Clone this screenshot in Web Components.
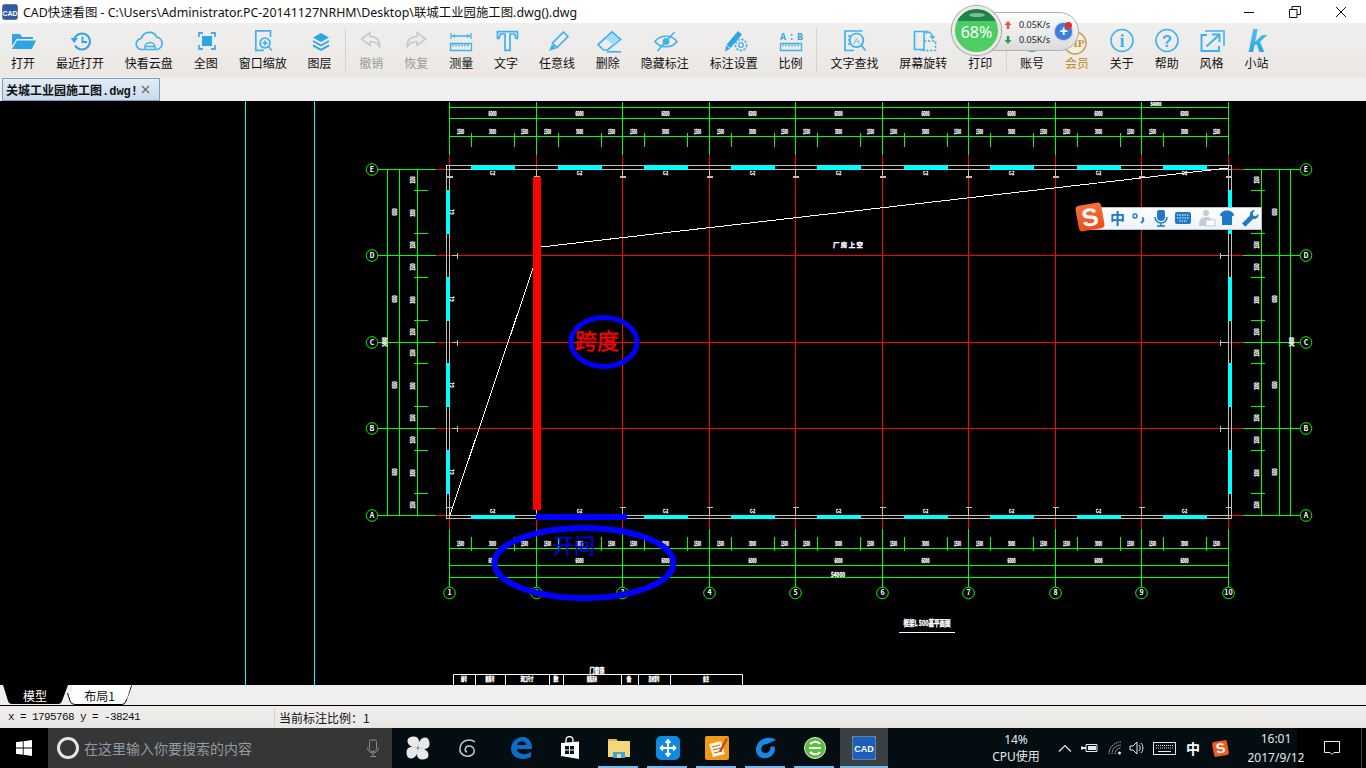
<!DOCTYPE html>
<html>
<head>
<meta charset="utf-8">
<title>CAD快速看图</title>
<style>
  html, body { margin: 0; height: 100%; overflow: hidden; background: #000; }
  body {
    display: flex;
    flex-direction: column;
    height: 768px;
    font-family: "Noto Sans CJK SC", "Noto Sans", sans-serif;
    color: #000;
  }
</style>
</head>
<body>
<cad-titlebar>CAD快速看图 - C:\Users\Administrator.PC-20141127NRHM\Desktop\联城工业园施工图.dwg().dwg</cad-titlebar>
<cad-toolbar>
  <cad-tool icon="open">打开</cad-tool>
  <cad-tool icon="recent">最近打开</cad-tool>
  <cad-tool icon="cloud">快看云盘</cad-tool>
  <cad-tool icon="full">全图</cad-tool>
  <cad-tool icon="zoomwin">窗口缩放</cad-tool>
  <cad-tool icon="layers">图层</cad-tool>
  <cad-sep></cad-sep>
  <cad-tool icon="undo" disabled>撤销</cad-tool>
  <cad-tool icon="redo" disabled>恢复</cad-tool>
  <cad-tool icon="measure">测量</cad-tool>
  <cad-tool icon="text">文字</cad-tool>
  <cad-tool icon="pencil">任意线</cad-tool>
  <cad-tool icon="eraser">删除</cad-tool>
  <cad-tool icon="eye">隐藏标注</cad-tool>
  <cad-tool icon="penset">标注设置</cad-tool>
  <cad-tool icon="scale">比例</cad-tool>
  <cad-sep></cad-sep>
  <cad-tool icon="find">文字查找</cad-tool>
  <cad-tool icon="rotate">屏幕旋转</cad-tool>
  <cad-tool icon="print">打印</cad-tool>
  <cad-sep></cad-sep>
  <cad-tool icon="user">账号</cad-tool>
  <cad-tool icon="vip" gold>会员</cad-tool>
  <cad-tool icon="info">关于</cad-tool>
  <cad-tool icon="help">帮助</cad-tool>
  <cad-tool icon="style">风格</cad-tool>
  <cad-tool icon="site">小站</cad-tool>
</cad-toolbar>
<cad-tabbar>关城工业园施工图.dwg!</cad-tabbar>
<cad-drawing><ime-bar></ime-bar></cad-drawing>
<cad-layouts></cad-layouts>
<cad-statusbar></cad-statusbar>
<win-taskbar></win-taskbar>
<net-widget></net-widget>

<script>
const BLUE = "#3db3ee";
const DEEP = "#2ea5e6";
const stroke = (d, w = 1.6, c = BLUE) =>
  `<path d="${d}" fill="none" stroke="${c}" stroke-width="${w}"/>`;
const fill = (d, c = DEEP) => `<path d="${d}" fill="${c}"/>`;

const rulerTicks = (y) => {
  let s = "";
  for (let x = 10; x < 28; x += 3) s += `M${x} ${y}v3`;
  return s;
};

const ICONS = {
  open: fill("M7 6h8l2 3h11v2H11.5L7 18z") + fill("M12 12.5H31l-4 8.5H7z"),
  recent:
    stroke("M12.3 11A8 8 0 1 1 13 17.5", 2, DEEP) +
    fill("M8.5 10h7.5l-3.7 5z") +
    stroke("M20.5 8.5V14h4.5", 1.8, DEEP),
  cloud:
    stroke("M13 21.5h-2a5.5 5.5 0 0 1-.6-11 8.2 8.2 0 0 1 15.4-1.4 6.3 6.3 0 0 1 .2 12.4h-1.5", 1.7) +
    stroke("M14 21.5v-2.5a5 4.5 0 0 1 10 0v2.5zM14 18.5h10", 1.5),
  full:
    fill("M14 8h10v10H14z") +
    stroke("M11 9V5h4M23 5h4v4M27 17v4h-4M15 21h-4v-4", 1.8),
  zoomwin:
    stroke("M25.5 9V2.8H10.8v19.5h8", 1.7) +
    stroke("M20 10a5 5 0 1 0 .01 0zM23.5 19l3.5 3.5M17.5 15h5M20 12.5v5", 1.6),
  layers:
    fill("M19 5l8 4.5-8 4.5-8-4.5z") +
    stroke("M11 13l8 4.5 8-4.5M11 17.3l8 4.5 8-4.5", 1.9, DEEP),
  undo: stroke("M17 4.5L8.5 11l8.5 6.5V13.5c5 0 8 1.5 10 6 0-7.5-4-11-10-11z", 1.6, "#c9c9c9"),
  redo: stroke("M19 4.5l8.5 6.5-8.5 6.5V13.5c-5 0-8 1.5-10 6 0-7.5 4-11 10-11z", 1.6, "#c9c9c9"),
  measure:
    stroke("M8 5v6M28 5v6M9 8h18", 1.3) +
    fill("M9 8l3-2v4zM27 8l-3-2v4z", BLUE) +
    stroke("M7.5 15.5h21v7h-21z" + rulerTicks(15.5), 1.3),
  text: stroke("M9.5 3.7H29.5V10.5H28L26.5 6H22V22.3H17V6H12.5L11 10.5H9.5z", 1.7),
  pencil:
    stroke("M24.5 4L29 8.5 18 19.5 13.5 15z", 1.7) +
    fill("M13 16l4.5 4.5L10 23z", BLUE),
  eraser:
    stroke("M22 4l8.5 7.5-13 10.5h-4L8 16.5z", 1.7) +
    fill("M22 5l7.5 6.6-6.5 5.4-7.4-6.6z", "#a7dcf6") +
    stroke("M17 23.8h14", 1.7),
  eye:
    stroke("M8 13.5c5-7 17-7 22 0-5 7-17 7-22 0z", 1.7) +
    fill("M19 10a3.5 3.5 0 1 0 .01 0z", BLUE) +
    stroke("M27.5 4L10.5 23", 1.6),
  penset:
    fill("M22 3l4 3.4-11.5 13.6-4-3.2z", DEEP) +
    fill("M10 17.5l4 3.2L9 23.6z", DEEP) +
    `<circle cx="25" cy="17" r="5.6" fill="#eeebe8" stroke="${BLUE}" stroke-width="1.6" stroke-dasharray="2.4 1.3"/>` +
    `<circle cx="25" cy="17" r="2.3" fill="none" stroke="${BLUE}" stroke-width="1.3"/>`,
  scale:
    `<text x="18.5" y="12" text-anchor="middle" font-family="Liberation Mono" font-weight="700" font-size="10" fill="${DEEP}" textLength="23">A:B</text>` +
    stroke("M7.5 15.5h21v7h-21z" + rulerTicks(15.5), 1.3),
  find:
    stroke("M26.5 3H9V22.5h9M12 8h3M12 12h2M12 16h2", 1.7) +
    stroke("M20.5 5.5a6.8 6.8 0 1 0 .01 0zM25.5 17.5l4 5", 1.7) +
    `<text x="20.5" y="15.5" text-anchor="middle" font-family="Liberation Sans" font-size="9" fill="${BLUE}">A</text>`,
  rotate:
    stroke("M9.5 3.5h9.5v18H9.5z", 1.6) +
    `<path d="M19 13h11.5v9.5H15" fill="none" stroke="${BLUE}" stroke-width="1.6" stroke-dasharray="2.5 1.5"/>` +
    stroke("M22 4c3 0 5 1.5 5.5 5", 1.4) +
    fill("M24.5 8h6l-3 3.5zM22 1.5V6.5L19.5 4z", BLUE),
  print:
    stroke("M12 10V4h12v6M9 10h18v9H9zM12 16h12v6H12z", 1.6),
  user:
    fill("M18 4a10 10 0 1 0 .01 0z", DEEP),
  vip:
    `<circle cx="16" cy="15" r="11" fill="#f6efe0" stroke="#c89c52" stroke-width="1.4"/>` +
    `<text x="16" y="19" text-anchor="middle" font-family="Liberation Serif" font-weight="700" font-size="11" fill="#c08f3c">VIP</text>`,
  info:
    `<circle cx="18" cy="12.5" r="11" fill="none" stroke="${BLUE}" stroke-width="1.6"/>` +
    `<text x="18" y="18.5" text-anchor="middle" font-family="Liberation Serif" font-weight="700" font-size="18" fill="${BLUE}">i</text>`,
  help:
    `<circle cx="18" cy="12.5" r="11" fill="none" stroke="${BLUE}" stroke-width="1.6"/>` +
    `<text x="18" y="19" text-anchor="middle" font-family="Liberation Sans" font-weight="700" font-size="17" fill="${BLUE}">?</text>`,
  style:
    stroke("M13 7H7.5v16H25v-5", 2) +
    stroke("M11 3h19v15", 1.6) +
    stroke("M12.5 18.5L25 7M18 6.5h7.5V14", 2),
  site:
    `<defs><linearGradient id="k" x1="0" y1="0" x2="0" y2="1"><stop offset="0" stop-color="#55c8f5"/><stop offset="1" stop-color="#1e9fe0"/></linearGradient></defs>` +
    `<text x="18" y="24" text-anchor="middle" font-family="Liberation Sans" font-style="italic" font-weight="700" font-size="32" fill="url(#k)">k</text>`,
};

customElements.define("cad-titlebar", class extends HTMLElement {
  constructor() {
    super();
    this.attachShadow({ mode: "open" });
    this.shadowRoot.innerHTML = `
      <style>
        :host { display: flex; align-items: center; height: 23px; flex: none; background: #fff; font-family: "Noto Sans", "Noto Sans CJK SC", sans-serif; font-size: 12.4px; color: #111; }
        .logo { width: 16px; height: 16px; margin: 0 5px 0 2px; flex: none; }
        .name { flex: 1; white-space: nowrap; }
        .win { display: flex; margin-right: 2px; }
        .win span { width: 46px; height: 23px; display: flex; align-items: center; justify-content: center; }
      </style>
      <svg class="logo" viewBox="0 0 16 16">
        <rect x=".5" y=".5" width="15" height="15" rx="2" fill="#2a5caa" stroke="#777"/>
        <text x="8" y="11.5" text-anchor="middle" font-family="Liberation Sans" font-size="7" font-weight="700" fill="#fff">CAD</text>
      </svg>
      <span class="name"><slot></slot></span>
      <div class="win">
        <span><svg width="12" height="12"><path d="M1 6.5h10" stroke="#111"/></svg></span>
        <span><svg width="12" height="12"><path d="M.5 3.5h7.500v8H.5zM3 3V.5h8.500v8H8" fill="none" stroke="#111"/></svg></span>
        <span><svg width="12" height="12"><path d="M1 1l10 10M11 1L1 11" stroke="#111"/></svg></span>
      </div>`;
  }
});

customElements.define("cad-toolbar", class extends HTMLElement {
  constructor() {
    super();
    this.attachShadow({ mode: "open" });
    this.shadowRoot.innerHTML = `
      <style>
        :host { display: flex; gap: 20.9px; height: 49px; flex: none; padding: 5px 0 0 11px; background: linear-gradient(#f0efee, #ebe7e3); overflow: hidden; }
      </style>
      <slot></slot>`;
  }
});

customElements.define("cad-tool", class extends HTMLElement {
  constructor() {
    super();
    this.attachShadow({ mode: "open" });
    const gold = this.hasAttribute("gold");
    const off = this.hasAttribute("disabled");
    this.shadowRoot.innerHTML = `
      <style>
        :host { display: flex; flex-direction: column; align-items: center; flex: none; font-size: 12px; line-height: 18px; color: ${gold ? "#c08a2a" : off ? "#9a9a9a" : "#111"}; }
        .icon { height: 26px; width: 0; display: flex; justify-content: center; }
        svg { flex: none; overflow: visible; }
      </style>
      <div class="icon"><svg width="36" height="26" viewBox="0 0 36 26">${ICONS[this.getAttribute("icon")] || ""}</svg></div>
      <slot></slot>`;
  }
});

customElements.define("cad-sep", class extends HTMLElement {
  constructor() {
    super();
    this.attachShadow({ mode: "open" });
    this.shadowRoot.innerHTML = `
      <style>
        :host { display: block; width: 1px; height: 44px; margin: 0 -8px 0 -7px; background: #d5d3d0; flex: none; }
      </style>`;
  }
});

customElements.define("cad-tabbar", class extends HTMLElement {
  constructor() {
    super();
    this.attachShadow({ mode: "open" });
    this.shadowRoot.innerHTML = `
      <style>
        :host { display: flex; align-items: flex-end; height: 24px; flex: none; background: #efefef; padding-left: 2px; }
        .tab { display: flex; align-items: center; width: 156px; height: 21px; margin-bottom: 0; border: 1px solid #7d9dc8; background: linear-gradient(#e3edf7, #c9dbee); font: 700 12px "Liberation Mono", "Noto Sans CJK SC", monospace; color: #111; white-space: nowrap; overflow: hidden; }
        .name { margin-left: 3px; flex: 1; overflow: hidden; }
        svg { flex: none; margin-right: 9px; }
      </style>
      <div class="tab">
        <span class="name"><slot></slot></span>
        <svg width="9" height="9"><path d="M1 1l7 7M8 1L1 8" stroke="#666" stroke-width="1.2"/></svg>
      </div>`;
  }
});

customElements.define("cad-drawing", class extends HTMLElement {
  constructor() {
    super();
    this.attachShadow({ mode: "open" });
    const axesX = [449.5, 536.5, 622.5, 709.5, 795.5, 882.5, 968.5, 1055.5, 1141.5, 1228.5];
    const axesY = [169.5, 255.5, 342.5, 428.5, 515.5];
    const GREEN = "#00ff00", RED = "#ff0000", CYAN = "#00ffff", GRAY = "#c0c0c0";
    const line = (x1, y1, x2, y2, c, w = 1) =>
      `<line x1="${x1}" y1="${y1}" x2="${x2}" y2="${y2}" stroke="${c}" stroke-width="${w}"/>`;
    const box = (x, y, w, h, c) => `<rect x="${x}" y="${y}" width="${w}" height="${h}" fill="${c}"/>`;
    // the sheet is zoomed far out, so its dimension figures squash into little blobs
    const label = (x, y, t, len = 8, size = 6.5) =>
      `<text x="${x}" y="${y}" font-size="${size}" font-weight="700" fill="#fff" stroke="#fff" stroke-width=".35" text-anchor="middle" dominant-baseline="middle" textLength="${len}" lengthAdjust="spacingAndGlyphs">${t}</text>`;
    const vlabel = (x, y, t, len = 8, size = 6.5) =>
      `<text transform="translate(${x} ${y}) rotate(-90)" font-size="${size}" font-weight="700" fill="#fff" stroke="#fff" stroke-width=".35" text-anchor="middle" dominant-baseline="middle" textLength="${len}" lengthAdjust="spacingAndGlyphs">${t}</text>`;
    const bubble = (x, y, t) =>
      `<circle cx="${x}" cy="${y}" r="5.8" fill="#000" stroke="${GREEN}"/>` +
      `<text x="${x}" y="${y + .5}" font-size="7" font-weight="700" fill="#fff" text-anchor="middle" dominant-baseline="middle">${t}</text>`;

    let s = "";
    // cyan lines of the neighbouring sheet
    s += line(245.5, 101, 245.5, 685, CYAN) + line(314.5, 101, 314.5, 685, CYAN);

    // dimension chains
    [107.5, 118.5, 136.5, 548.5, 565.5, 577.5].forEach((y) => (s += line(449, y, 1229, y, GREEN)));
    axesX.forEach((x, i) => {
      s += line(x, 155, x, 530, RED);
      s += line(x, 102, x, 155, GREEN) + line(x, 529, x, 587, GREEN);
      s += bubble(x, 593, i + 1);
      if (i < 9) {
        s += line(x + 21.5, 133, x + 21.5, 147, GREEN) + line(x + 64.5, 133, x + 64.5, 147, GREEN);
        s += line(x + 21.5, 537, x + 21.5, 551, GREEN) + line(x + 64.5, 537, x + 64.5, 551, GREEN);
        s += label(x + 43, 114, "6000") + label(x + 43, 561, "6000");
        [11, 43, 75].forEach((d) => {
          s += label(x + d, 132, d === 43 ? "3000" : "1500", 7) + label(x + d, 544, d === 43 ? "3000" : "1500", 7);
        });
        s += label(x + 43, 173.5, "C-2", 5, 5) + label(x + 43, 511.5, "C-2", 5, 5);
      }
    });
    s += label(1156, 104.5, "54000", 11, 5.5) + label(838, 575, "54000", 14);

    // rows
    axesY.forEach((y, i) => {
      const t = "EDCBA"[i];
      s += line(378, y, 436, y, GREEN) + line(1243, y, 1300, y, GREEN);
      s += line(436, y, 447, y, RED) + line(1232, y, 1243, y, RED);
      if (i > 0 && i < 4) s += line(447, y, 1232, y, RED);
      s += bubble(372, y, t) + bubble(1306, y, t);
    });
    [387.5, 399.5, 417.5, 1261.5, 1279.5, 1290.5].forEach((x) => (s += line(x, 169, x, 516, GREEN)));

    // walls
    s += line(447, 165.5, 1232, 165.5, GRAY) + line(447, 169.5, 1232, 169.5, GRAY);
    s += line(447, 515.5, 1232, 515.5, GRAY) + line(447, 518.5, 1232, 518.5, GRAY);
    s += line(446.5, 165, 446.5, 519, GRAY) + line(449.5, 165, 449.5, 519, GRAY);
    s += line(1228.5, 165, 1228.5, 519, GRAY) + line(1231.5, 165, 1231.5, 519, GRAY);
    s += box(446, 165, 1, 5, "#ffff00");

    axesX.slice(0, 9).forEach((x) => {
      const a = Math.floor(x + 21.5);
      s += box(a, 165, 44, 5, CYAN) + box(a, 515, 44, 4, CYAN);
    });
    [190, 277, 363, 450].forEach((y) => {
      s += box(446, y, 4, 44, CYAN) + box(1228, y, 4, 44, CYAN);
      s += vlabel(453, y + 22, "C-1", 5, 5);
      s += line(414, y, 428, y, GREEN) + line(414, y + 43, 428, y + 43, GREEN);
      s += line(1251, y, 1265, y, GREEN) + line(1251, y + 43, 1265, y + 43, GREEN);
      [-10, 23, 55].forEach((d) => (s += vlabel(413, y + d, d === 23 ? "3000" : "1500", 7) + vlabel(1257, y + d, d === 23 ? "3000" : "1500", 7)));
      s += vlabel(395.5, y + 22, "6000", 7) + vlabel(1275, y + 22, "6000", 7);
    });
    s += vlabel(385, 342, "24000", 9) + vlabel(1292, 342, "24000", 9);

    // columns
    axesX.forEach((x) => {
      s += line(x, 170, x, 176, GRAY, 1) + box(x - 2.5, 176, 6, 2, GRAY);
      s += line(x, 508, x, 515, GRAY, 1) + box(x - 2.5, 507, 6, 1, GRAY);
    });
    [255.5, 342.5, 428.5].forEach((y) => {
      s += line(452, y, 457, y, GRAY) + line(457.5, y - 3, 457.5, y + 3, GRAY);
      s += line(1220, y, 1228, y, GRAY) + line(1220.5, y - 3, 1220.5, y + 3, GRAY);
    });

    // sheet texts
    s += label(848, 245, "厂 房 上 空", 30, 6);
    s += label(927, 623.5, "框架L 500基平面图", 47, 8);
    s += box(899, 632, 56, 1, "#fff");

    // door table, cut off by the edge of the viewport
    s += `<path d="M453.5 685V674.5H742.5V685" fill="none" stroke="#fff"/>`;
    [475, 505, 549, 563, 621, 638, 670].forEach((x) => (s += line(x + .5, 675, x + .5, 685, "#fff")));
    [[464, "编号", 6], [490, "图集号", 9], [527, "洞口尺寸", 13], [556, "数", 5], [592, "图集选用", 10], [629, "备", 5], [654, "选用型号", 11], [706, "备注", 6]].forEach(
      ([x, t, len]) => (s += label(x, 679.5, t, len, 5.5))
    );
    s += label(597, 671, "门窗表", 15, 7);

    // user markups
    s += box(533, 177, 8, 333, RED);
    s += box(536, 514, 91, 6, "#0000ff");
    s += line(450, 515, 533, 268, "#fff") + line(541, 247, 1228, 168, "#fff");
    s += `<ellipse cx="604" cy="342" rx="33" ry="24.5" fill="none" stroke="#0000ff" stroke-width="5"/>`;
    s += `<ellipse cx="584" cy="563" rx="89.5" ry="35" fill="none" stroke="#0000ff" stroke-width="6"/>`;
    s += `<text x="597" y="343" font-size="22" fill="#ff0000" stroke="#ff0000" stroke-width=".4" text-anchor="middle" dominant-baseline="middle">跨度</text>`;
    s += `<text x="574" y="547" font-size="21" fill="#0000ff" text-anchor="middle" dominant-baseline="middle">开间</text>`;

    this.shadowRoot.innerHTML = `
      <style>
        :host { display: block; position: relative; height: 584px; flex: none; background: #000; overflow: hidden; }
        svg { display: block; font-family: "Noto Sans CJK SC", sans-serif; }
        line, rect { shape-rendering: crispEdges; }
      </style>
      <svg width="1366" height="584" viewBox="0 101 1366 584">${s}</svg>
      <slot></slot>`;
  }
});

customElements.define("ime-bar", class extends HTMLElement {
  constructor() {
    super();
    this.attachShadow({ mode: "open" });
    this.shadowRoot.innerHTML = `
      <style>
        :host { position: absolute; left: 1076px; top: 102px; width: 186px; height: 30px; display: block; font-family: "Noto Sans CJK SC", sans-serif; }
        .bar { position: absolute; left: 12px; right: 0; top: 4px; height: 23px; background: linear-gradient(#fff, #eef3f8); border: 1px solid #b9c4cf; box-sizing: border-box; }
        .logo { position: absolute; left: 1px; top: 1px; width: 26px; height: 26px; border-radius: 4px; background: linear-gradient(#f6703a, #ea4f1a); transform: rotate(-10deg); color: #fff; font: 700 25px/26px "Liberation Sans", sans-serif; text-align: center; }
        svg { position: absolute; left: 0; top: 0; }
        .zh { position: absolute; left: 34px; top: 3px; font-size: 15px; line-height: 24px; font-weight: 700; color: #1f78c8; }
      </style>
      <div class="bar"></div>
      <div class="logo">S</div>
      <span class="zh">中</span>
      <svg width="186" height="30" viewBox="0 0 186 30">
        <circle cx="59" cy="13" r="2" fill="none" stroke="#1f78c8" stroke-width="1.4"/>
        <path d="M66 15c2 0 2 3-1 5" fill="none" stroke="#1f78c8" stroke-width="2"/>
        <path d="M83 7h4a2 2 0 0 1 2 2v5a4 4 0 0 1-8 0V9a2 2 0 0 1 2-2z" fill="#1f78c8"/>
        <path d="M79 14a6 6 0 0 0 12 0M85 20v2.500M81 23h8" fill="none" stroke="#1f78c8" stroke-width="1.500"/>
        <g transform="translate(6 2)">
          <rect x="93" y="7" width="16" height="12" rx="2" fill="#1f78c8"/>
          <path d="M95 10h12M95 13h12M97 16h8" stroke="#fff" stroke-width="1.2" stroke-dasharray="1.5 1"/>
        </g>
        <g transform="translate(1 0)">
          <circle cx="129" cy="10" r="3" fill="#c3ccd6"/>
          <path d="M122 22c0-6 3-8 7-8s6 2 7 4l-4 5h-9z" fill="#c3ccd6"/>
          <rect x="129" y="17" width="9" height="6" fill="#fff" stroke="#c3ccd6"/>
        </g>
        <path d="M146 9l3-1.500h4l3 1.500 2.500 3-2.500 1.500V22h-10v-8.500L143.500 12z" fill="#1f78c8"/>
        <path d="M166 20.500l8-8a4 4 0 0 1 5-5l-2.500 2.500.8 2.500 2.500.8 2.500-2.500a4 4 0 0 1-5 5l-8 8z" fill="#1f78c8"/>
      </svg>`;
  }
});

customElements.define("cad-layouts", class extends HTMLElement {
  constructor() {
    super();
    this.attachShadow({ mode: "open" });
    this.shadowRoot.innerHTML = `
      <style>
        :host { display: flex; height: 20px; flex: none; background: #efefef; border-bottom: 1px solid #000; font-size: 12px; box-sizing: content-box; }
        .tab { position: relative; display: flex; align-items: center; justify-content: center; height: 20px; flex: none; }
        .model { width: 64px; margin-left: 3px; color: #fff; }
        .sheet { width: 65px; color: #111; }
        svg { position: absolute; left: 0; top: 0; }
        span { position: relative; }
      </style>
      <div class="tab model">
        <svg width="66" height="20"><path d="M0 0H65L59 16Q58 19 55 19H9Q6 19 5 16z" fill="#000"/></svg>
        <span>模型</span>
      </div>
      <div class="tab sheet">
        <svg width="66" height="20"><path d="M.5 8L3 16Q4 19.500 8 19.500H55Q58 19.500 59 16L64.500 .5" fill="#fff" stroke="#000"/><path d="M5 0H64L60 14H5z" fill="#fff"/></svg>
        <span>布局1</span>
      </div>`;
  }
});

customElements.define("cad-statusbar", class extends HTMLElement {
  constructor() {
    super();
    this.attachShadow({ mode: "open" });
    this.shadowRoot.innerHTML = `
      <style>
        :host { display: flex; align-items: center; height: 22px; flex: none; background: linear-gradient(#f1f0ee, #e9e5e1); font-size: 12px; color: #111; }
        .pos { width: 266px; flex: none; padding-left: 8px; font: 11px "Liberation Mono", monospace; letter-spacing: -.6px; white-space: pre; box-sizing: content-box; }
        .sep { width: 1px; height: 18px; background: #d3d0cc; flex: none; }
        .scale { padding-left: 4px; }
      </style>
      <span class="pos">x = 1795768 y = -38241</span>
      <span class="sep"></span>
      <span class="scale">当前标注比例：1</span>`;
  }
});

customElements.define("win-taskbar", class extends HTMLElement {
  constructor() {
    super();
    this.attachShadow({ mode: "open" });
    const petal = "M12 11.500C7 12.500 1.500 9.500 1.500 5 1.500 1.500 5 .5 8 .5 12.500 .5 14.500 5 12 11.500z";
    const apps = [
      [[0, 90, 180, 270].map((r) => `<path d="${petal}" fill="#e8e8e8" transform="rotate(${r} 12 12)"/>`).join(""), false],
      [`<path d="M20 6c-5-4-14-2-15 6-1 7 7 10 12 7 4-3 2-9-3-9-4 0-5 5-2 6" fill="none" stroke="#c8c8c8" stroke-width="1.500"/>`, false],
      [`<path d="M2 12C3 5 8 1 14 1c6 0 9 5 9 12H8c0 5 8 7 14 3v5c-8 4-20 2-20-9zM8 9h9c0-5-8-5-9 0z" fill="#0a6fc9"/>`, false],
      [`<path d="M3 7l18-1.500V23L3 20z" fill="#fff"/><path d="M8 7V4a3 3 0 0 1 7 0v2" fill="none" stroke="#fff" stroke-width="1.300"/><path d="M7 10h4v3.500H7zM12 10h4v3.500h-4zM7 14.500h4V18H7zM12 14.500h4V18h-4z" fill="#0a0f12"/>`, false],
      [`<path d="M1 3h8l2 2h12v16H1z" fill="#f6d67a"/><path d="M1 3h8l1 2H1z" fill="#e8b93f"/><path d="M6 16h12v6H6z" fill="#3aa7e0"/><path d="M10 18h4v4h-4z" fill="#f6d67a"/>`, true],
      [`<rect width="24" height="24" rx="5" fill="#0f8ae0"/><path d="M12 4v16M5 12h14M9.500 7L12 4l2.500 3M9.500 17l2.500 3 2.500-3M7 9.500L4.500 12 7 14.500M17 9.500l2.500 2.500-2.500 2.500" fill="none" stroke="#fff" stroke-width="1.800"/>`, true],
      [`<rect width="24" height="24" rx="2" fill="#f09a18"/><path d="M4 8l12-3 4 13-12 3z" fill="#fbf3d5"/><path d="M7 11l8-2M8 14l8-2M9 17l8-2" stroke="#9b7b3a"/><path d="M14 15l7-13 2 1-7 13z" fill="#c8431c"/>`, true],
      [`<path d="M22 4c-6-5-19-2-20 9-.5 8 8 11 14 8 5-3 6-8 4-11l-4 1c1 4-2 7-6 6-5-2-3-9 3-9z" fill="#1688e8"/>`, true],
      [`<circle cx="12" cy="12" r="10.500" fill="#5bbd3c"/><circle cx="12" cy="12" r="10.500" fill="none" stroke="#d8f0cc"/><path d="M6 12h12M7 16c3 3 8 3 10 0M7 8c3-3 8-3 10 0" fill="none" stroke="#fff" stroke-width="2.200"/>`, true],
      [`<rect width="24" height="24" rx="3" fill="#1c5fb8" stroke="#9aa3ab"/><text x="12" y="16" text-anchor="middle" font-family="Liberation Sans" font-weight="700" font-size="9" fill="#fff">CAD</text>`, true, true],
    ];
    const appHtml = apps
      .map(([svg, on, active], i) => `
        <div class="app ${on ? "on" : ""} ${active ? "active" : ""} ${i === 2 ? "edge" : ""}">
          <svg width="24" height="24" viewBox="0 0 24 24">${svg}</svg>
        </div>`)
      .join("");
    this.shadowRoot.innerHTML = `
      <style>
        :host { display: flex; height: 40px; flex: none; background: linear-gradient(to right, #030d12 1297px, #000 1297px, #000 1361px, #444 1361px, #444 1362px, #000 1362px); color: #fff; font-family: "Noto Sans", "Noto Sans CJK SC", sans-serif; font-size: 12px; }
        .start { width: 48px; flex: none; background: #000; display: flex; align-items: center; justify-content: center; }
        .search { width: 344px; flex: none; background: #363636; display: flex; align-items: center; box-sizing: border-box; padding-left: 9px; color: #8f9ba6; font: 14px "Noto Sans CJK SC", sans-serif; }
        .ring { width: 16px; height: 16px; border: 3px solid #e4e4e4; border-radius: 50%; margin-right: 5px; flex: none; }
        .hint { flex: 1; white-space: nowrap; }
        .mic { margin-right: 13px; flex: none; }
        .apps { display: flex; margin-left: 1px; flex: none; }
        .app { width: 49px; height: 40px; display: flex; align-items: center; justify-content: center; position: relative; box-sizing: border-box; padding-bottom: 1px; }
        .app.edge { margin-left: 5px; }
        .app.on::after { content: ""; position: absolute; left: 4px; right: 5px; bottom: 0; height: 2px; background: #76b9ed; }
        .app.active { background: #3a4145; width: 48px; margin-left: 1px; }
        .app.active::after { left: 0; right: 0; }
        .cpu { width: 60px; margin-left: 98px; flex: none; display: flex; flex-direction: column; align-items: center; line-height: 17px; padding-top: 3px; font-size: 12px; color: #e8e8e8; white-space: nowrap; box-sizing: border-box; }
        .tray { display: flex; align-items: center; flex: none; margin-left: 12px; }
        .tray svg { flex: none; display: block; }
        .lang { font: 700 14px "Noto Sans CJK SC", sans-serif; margin: 0 12px 0 10px; width: 15px; }
        .sg { width: 15px; height: 15px; border-radius: 2px; background: #ee5a1f; transform: rotate(-10deg); font: 700 14px/15px "Liberation Sans", sans-serif; text-align: center; margin-right: 18px; flex: none; }
        .clock { width: 60px; flex: none; text-align: center; line-height: 19px; font-size: 12px; color: #e8e8e8; white-space: nowrap; }
        .bell { margin-left: 18px; }
      </style>
      <div class="start">
        <svg width="16" height="16" viewBox="0 0 16 16"><path d="M0 2.300l6.800-1V7.600H0zM7.600 1.200L16 0v7.600H7.600zM0 8.400h6.800v6.300L0 13.700zM7.600 8.400H16V16l-8.400-1.200z" fill="#fff"/></svg>
      </div>
      <div class="search">
        <span class="ring"></span>
        <span class="hint">在这里输入你要搜索的内容</span>
        <svg class="mic" width="12" height="18" viewBox="0 0 12 18"><path d="M4 1h4a1.500 1.500 0 0 1 1.500 1.500v7A3 3 0 0 1 6 12.500a3 3 0 0 1-3.500-3v-7A1.500 1.500 0 0 1 4 1zM.5 8.500C.5 12 3 14 6 14s5.500-2 5.500-5.500M6 14v3M3 17.500h6" fill="none" stroke="#8a8a8a"/></svg>
      </div>
      <div class="apps">${appHtml}</div>
      <div class="cpu"><span>14%</span><span>CPU使用</span></div>
      <div class="tray">
        <svg width="14" height="8" viewBox="0 0 14 8" style="margin-right:9px"><path d="M1 7.500L7 1.500l6 6" fill="none" stroke="#e8e8e8" stroke-width="1.200"/></svg>
        <svg width="17" height="10" viewBox="0 0 17 10" style="margin-right:10px"><path d="M5 1.500h11v7H5zM1 3v4" fill="none" stroke="#e8e8e8"/><path d="M7 3h8v4H7zM0 4h5v2H0z" fill="#e8e8e8"/></svg>
        <svg width="14" height="14" viewBox="0 0 14 14" style="margin-right:7px"><path d="M1 13A12 12 0 0 1 13 1M4 13a9 9 0 0 1 9-9M7 13a6 6 0 0 1 6-6" fill="none" stroke="#bbb" stroke-dasharray="1.500 .7"/><circle cx="11.500" cy="12" r="1.500" fill="#e8e8e8"/></svg>
        <svg width="16" height="14" viewBox="0 0 16 14" style="margin-right:8px"><path d="M1 5h3l4-4v12l-4-4H1zM10 4c1.500 1.500 1.500 4.500 0 6M12 2c2.500 2.500 2.500 7.500 0 10" fill="none" stroke="#e8e8e8"/></svg>
        <svg width="23" height="13" viewBox="0 0 23 13"><rect x=".5" y=".5" width="22" height="12" fill="none" stroke="#e8e8e8"/><path d="M3 3.500h17M3 6h17" stroke="#e8e8e8" stroke-dasharray="1 1"/><path d="M5 9.500h13" stroke="#e8e8e8"/></svg>
        <span class="lang">中</span>
        <span class="sg">S</span>
        <div class="clock"><div>16:01</div><div>2017/9/12</div></div>
        <svg class="bell" width="16" height="16" viewBox="0 0 16 16"><path d="M.5 1.500h15v11H10l-2 2-2-2H.5z" fill="none" stroke="#f0f0f0"/></svg>
      </div>`;
  }
});

customElements.define("net-widget", class extends HTMLElement {
  constructor() {
    super();
    this.attachShadow({ mode: "open" });
    this.shadowRoot.innerHTML = `
      <style>
        :host { position: absolute; left: 952px; top: 6px; width: 128px; height: 50px; display: block; font-family: "Noto Sans", sans-serif; }
        .pill { position: absolute; left: 24px; top: 6px; width: 103px; height: 39px; border-radius: 20px; border: 1px solid #aeaeae; box-sizing: border-box; background: linear-gradient(#fdfdfd, #dcdcdc); }
        .ball { position: absolute; left: 0; top: 0; width: 49px; height: 49px; border-radius: 50%; box-sizing: border-box; border: 3px solid #e9e9e9; box-shadow: 0 0 1px 1px #9c9c9c; background: linear-gradient(#1a7a42 0, #1f8a4a 27%, #4ccb62 27%, #4fce63 100%); color: #fff; font-size: 16px; line-height: 47px; text-align: center; overflow: hidden; }
        .ball::before { content: ""; position: absolute; left: 14px; top: 4px; width: 16px; height: 4px; border-radius: 50%; background: rgba(255,255,255,.45); }
        .rate { position: absolute; left: 67px; font-size: 9px; line-height: 12px; color: #222; white-space: nowrap; }
        svg { position: absolute; }
        .plus { position: absolute; left: 103px; top: 17px; width: 17px; height: 17px; border-radius: 50%; background: #3a7fdc; box-shadow: 0 0 2px #777; color: #fff; font: 700 14px/16px "Liberation Sans", sans-serif; text-align: center; }
        .dot { position: absolute; left: 113px; top: 16px; width: 7px; height: 7px; border-radius: 50%; background: #de2f2f; }
      </style>
      <div class="pill"></div>
      <div class="ball">68%</div>
      <svg style="left:50px;top:14px" width="12" height="10" viewBox="0 0 12 10"><path d="M6 1l3.500 4H7.300v4H4.700V5H2.500z" fill="#e8533a"/></svg>
      <svg style="left:50px;top:29px" width="12" height="10" viewBox="0 0 12 10"><path d="M6 9L2.500 5h2.200V1h2.600v4h2.200z" fill="#2f9a4d"/></svg>
      <span class="rate" style="top:13px">0.05K/s</span>
      <span class="rate" style="top:28px">0.05K/s</span>
      <div class="plus">+</div>
      <div class="dot"></div>`;
  }
});
</script>
</body>
</html>
